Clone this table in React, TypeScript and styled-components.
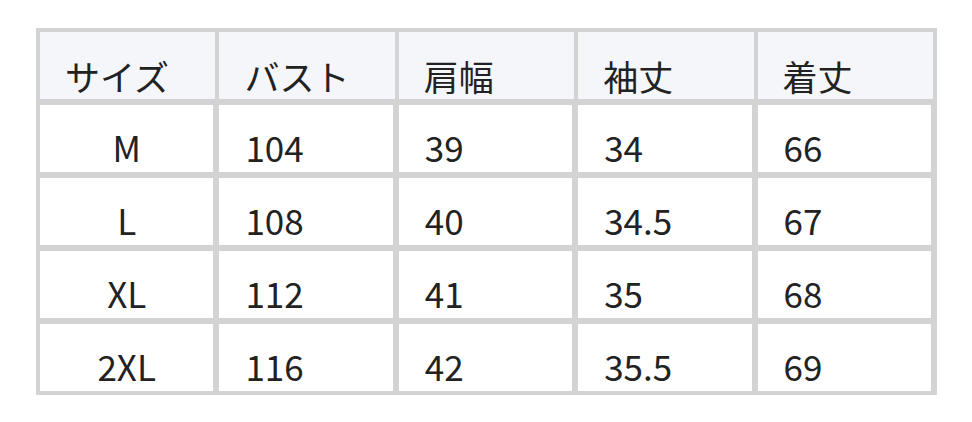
import React from 'react';
import styled, { createGlobalStyle } from 'styled-components';

const GlobalStyle = createGlobalStyle`
  html, body {
    margin: 0;
    padding: 0;
    background: #ffffff;
  }
  body {
    font-family: "Noto Sans CJK JP", "Noto Sans", sans-serif;
    color: #222222;
  }
`;

const Page = styled.div`
  width: 972px;
  height: 422px;
  padding: 28px 35px 0 36px;
  box-sizing: border-box;
`;

const Table = styled.div`
  display: flex;
  flex-direction: column;
  gap: 6px;
  border: 4px solid #d3d3d3;
  background: #d3d3d3;
  width: 901px;
  box-sizing: border-box;
`;

const Row = styled.div`
  display: grid;
  grid-template-columns: repeat(5, 1fr);
  column-gap: 4px;
  height: 67px;
`;

const Cell = styled.div<{ $head?: boolean; $center?: boolean }>`
  display: flex;
  align-items: flex-end;
  justify-content: ${({ $center }) => ($center ? 'center' : 'flex-start')};
  padding: ${({ $head }) => ($head ? '0 0 6px 25px' : '0 0 8px 26px')};
  background: ${({ $head }) => ($head ? '#f5f6fa' : '#ffffff')};
  border-right: ${({ $head }) => ($head ? 'none' : '2px solid #d3d3d3')};
  font-size: 35px;
  line-height: 1;
  box-sizing: border-box;
  white-space: nowrap;
  ${({ $center }) => ($center ? 'padding-left: 0;' : '')}
`;

const headers = ['サイズ', 'バスト', '肩幅', '袖丈', '着丈'];

const sizes: string[][] = [
  ['M', '104', '39', '34', '66'],
  ['L', '108', '40', '34.5', '67'],
  ['XL', '112', '41', '35', '68'],
  ['2XL', '116', '42', '35.5', '69'],
];

const App: React.FC = () => {
  return (
    <>
      <GlobalStyle />
      <Page>
        <Table>
          <Row>
            {headers.map((h) => (
              <Cell key={h} $head>
                {h}
              </Cell>
            ))}
          </Row>
          {sizes.map((row) => (
            <Row key={row[0]}>
              {row.map((v, i) => (
                <Cell key={i} $center={i === 0}>
                  {v}
                </Cell>
              ))}
            </Row>
          ))}
        </Table>
      </Page>
    </>
  );
};

export default App;
